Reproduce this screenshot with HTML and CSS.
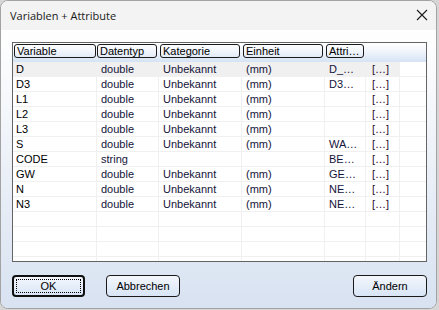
FILE: index.html
```html
<!DOCTYPE html>
<html>
<head>
	<meta charset="UTF-8" />
	<title>Variablen + Attribute</title>
	<link rel="stylesheet" href="styles.css">
</head>
<body>
	<div class="window">
		<div class="titlebar">
			<span class="title">Variablen + Attribute</span>
			<svg class="close" width="12" height="12" viewBox="0 0 12 12">
				<path d="M1 1 L11 11 M11 1 L1 11" stroke="#1b1b1b" stroke-width="1.1" fill="none" />
			</svg>
		</div>
		<div class="client">
			<div class="list">
				<div class="head">
					<div class="hcell"><span>Variable</span></div>
					<div class="hcell"><span>Datentyp</span></div>
					<div class="hcell"><span>Kategorie</span></div>
					<div class="hcell"><span>Einheit</span></div>
					<div class="hcell"><span>Attri…</span></div>
				</div>
				<div class="rows" id="rows"></div>
			</div>
			<div class="buttons">
				<button class="btn default"><span>OK</span></button>
				<button class="btn">Abbrechen</button>
				<div class="spacer"></div>
				<button class="btn">Ändern</button>
			</div>
		</div>
	</div>
	<script>
	// name, type, category, unit, attribute
	var data = [
		['D','double','Unbekannt','(mm)','D_…'],
		['D3','double','Unbekannt','(mm)','D3…'],
		['L1','double','Unbekannt','(mm)',''],
		['L2','double','Unbekannt','(mm)',''],
		['L3','double','Unbekannt','(mm)',''],
		['S','double','Unbekannt','(mm)','WA…'],
		['CODE','string','','','BE…'],
		['GW','double','Unbekannt','(mm)','GE…'],
		['N','double','Unbekannt','(mm)','NE…'],
		['N3','double','Unbekannt','(mm)','NE…']
	];
	var rows = document.getElementById('rows'), html = '';
	for(var i=0;i<14;i++){
		var r = data[i];
		html += '<div class="row' + (i==0?' hot':'') + '">';
		if(r){
			html += '<div class="cell c1">'+r[0]+'</div><div class="cell">'+r[1]+'</div><div class="cell">'+r[2]+
				'</div><div class="cell">'+r[3]+'</div><div class="cell">'+r[4]+'</div><div class="cell more">[…]</div><div class="cell last"></div>';
		}else{
			for(var j=0;j<7;j++)html += '<div class="cell'+(j==6?' last':'')+'"></div>';
		}
		html += '</div>';
	}
	rows.innerHTML = html;
	</script>
</body>
</html>
```

FILE: styles.css
```css
body {
	margin: 0;
	width: 439px;
	height: 310px;
	background: #d6d6d6;
	overflow: hidden;
}
.window {
	width: 437px;
	height: 309px;
	box-sizing: border-box;
	border: 1px solid #a2a2a2;
	border-radius: 8px;
	overflow: hidden;
	display: flex;
	flex-direction: column;
	background: #f3f3f3;
}
.titlebar {
	height: 29px;
	display: flex;
	align-items: center;
	justify-content: space-between;
	padding: 0 8px 0 9px;
	background: #f3f3f3;
}
.title {
	font-family: "Open Sans", sans-serif;
	font-size: 11px;
	color: #1a1a1a;
	margin-top: -1px;
}
.close {
	margin-top: -1px;
}
.client {
	flex: 1;
	display: flex;
	flex-direction: column;
	padding: 12px 9px 11px 11px;
	background: linear-gradient(#ffffff, #f7f9fc 20%, #d8e2f1);
	font-family: "Liberation Sans", Arial, sans-serif;
	font-size: 11px;
}
.list {
	height: 220px;
	box-sizing: border-box;
	border: 1px solid #646464;
	background: #ffffff;
	overflow: hidden;
}
.head, .row {
	display: grid;
	grid-template-columns: 84px 62px 83px 83px 41px 34px 1fr;
}
.head {
	height: 19px;
	background: linear-gradient(#ffffff, #f2f6fc 40%, #d6e3f4);
}
.hcell {
	padding: 1px 0 0 1px;
}
.hcell span {
	display: block;
	height: 14px;
	line-height: 13px;
	margin-right: 1px;
	padding-left: 2px;
	box-sizing: border-box;
	border: 1px solid #1a1a1a;
	border-radius: 3px;
	color: #000000;
	white-space: nowrap;
}
.hcell:nth-child(2) span { margin-left: -1px; margin-right: 2px; }
.hcell:nth-child(3) span { margin-right: 2px; }
.hcell:nth-child(4) span { margin-right: 2px; }
.hcell:nth-child(5) span { margin-right: 2px; }
.row {
	height: 14px;
	border-bottom: 1px solid #f0f0f0;
}
.row.hot .cell:not(.last) {
	background: #f0f0f0;
}
.cell {
	border-right: 1px solid #f0f0f0;
	line-height: 14px;
	padding-left: 4px;
	color: #14143a;
	white-space: nowrap;
	overflow: hidden;
}
.cell.c1 {
	padding-left: 3px;
	color: #000000;
}
.cell.more {
	padding-left: 6px;
	color: #2a1030;
}
.cell.last {
	border-right: none;
}
.buttons {
	display: flex;
	align-items: flex-end;
	gap: 21px;
	margin-top: 13px;
}
.spacer {
	flex: 1;
}
.btn {
	width: 74px;
	height: 22px;
	margin: 0;
	padding: 0;
	box-sizing: border-box;
	border: 1px solid #1a1a1a;
	border-radius: 4px;
	background: linear-gradient(#f4f7fc, #e6eef9 50%, #d8e5f6);
	font-family: "Liberation Sans", Arial, sans-serif;
	font-size: 11px;
	color: #000000;
}
.btn.default {
	width: 73px;
	border: 2px solid #111111;
	padding: 2px;
}
.btn.default span {
	display: block;
	height: 100%;
	line-height: 12px;
	border: 1px dotted #000000;
	box-sizing: border-box;
}
```
